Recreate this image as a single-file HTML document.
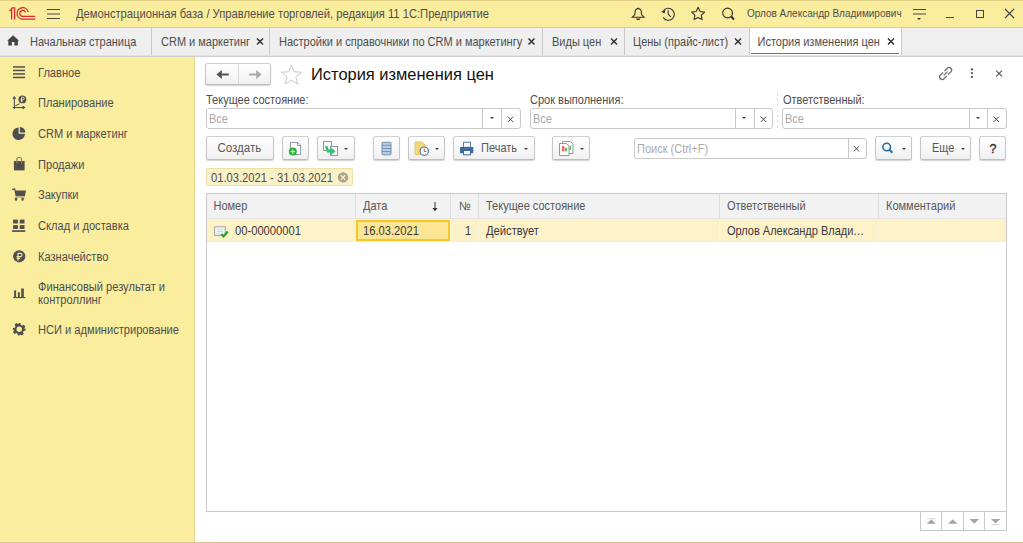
<!DOCTYPE html>
<html><head><meta charset="utf-8">
<style>
*{box-sizing:border-box;margin:0;padding:0}
html,body{width:1023px;height:543px;overflow:hidden;background:#fff;font-family:"Liberation Sans",sans-serif;color:#4d4d4d}
.a{position:absolute}
.t{position:absolute;white-space:nowrap;font-size:11px;line-height:11px;transform:scaleY(1.1);transform-origin:0 9px}
svg{position:absolute;overflow:visible}
#hdr{left:0;top:0;width:1023px;height:28px;background:#fbed9e;border-top:1px solid #e0cf85;border-bottom:1px solid #d9c98a}
#tabs{left:0;top:28px;width:1023px;height:29px;background:#efefef;border-bottom:1px solid #cfcfcf}
.sep{position:absolute;top:28px;width:1px;height:27px;background:#c8c8c8}
#side{left:0;top:57px;width:195px;height:486px;background:#fbed9e;border-right:1px solid #e3d38f}
#bot{left:0;top:542px;width:1023px;height:1px;background:#d9c98a}
.btn{position:absolute;height:24px;border:1px solid #c8c8c8;border-color:#d0d0d0 #c6c6c6 #bdbdbd;border-radius:2.5px;background:linear-gradient(#ffffff,#f0f0f0);box-shadow:0 1px 1px rgba(0,0,0,.18)}
.fld{position:absolute;height:21px;border:1px solid #c9c9c9;border-radius:3px;background:#fff}
.dd{position:absolute;top:0;height:19px;border-left:1px solid #c9c9c9}
.arr{position:absolute;width:0;height:0;border-left:2.4px solid transparent;border-right:2.4px solid transparent;border-top:2.6px solid #3a3a3a}
</style></head><body>
<div id="hdr" class="a"></div>
<div id="tabs" class="a"></div>
<div id="side" class="a"></div>
<div class="a" style="left:0;top:55px;width:1023px;height:1px;background:#e2e2e2"></div>

<!-- logo -->
<svg style="left:0;top:0" width="40" height="28" viewBox="0 0 40 28">
 <g fill="none" stroke="#d8282a" stroke-width="1.3">
  <path d="M9.3,10.6 L11.6,9.8 M11.6,8 V19.6 M11.6,7.9 H14.6 V19.6"/>
  <path d="M28.3,12.2 A5.7,5.7 0 1 0 22.6,19.1 H35.2"/>
  <path d="M25.4,12.3 A2.9,2.9 0 1 0 22.6,16.3 H35.2"/>
 </g>
</svg>
<!-- hamburger -->
<div class="a" style="left:47px;top:9px;width:13px;height:1px;background:#4a4a44"></div>
<div class="a" style="left:47px;top:13px;width:13px;height:2px;background:#9f9a78"></div>
<div class="a" style="left:47px;top:18px;width:13px;height:1px;background:#4a4a44"></div>

<div class="t" style="left:76px;top:9px;font-size:11.2px">Демонстрационная база / Управление торговлей, редакция 11 1С:Предприятие</div>

<!-- header icons -->
<svg style="left:628px;top:4px" width="60" height="20" viewBox="0 0 60 20">
 <g fill="none" stroke="#333" stroke-width="1.1">
  <path d="M10.2,4.6 C7.4,4.6 7,7 7,9.5 C7,11.5 5.2,12.2 4.2,13.3 H16.2 C15.2,12.2 13.4,11.5 13.4,9.5 C13.4,7 13,4.6 10.2,4.6 Z"/>
  <path d="M35.6,6.6 A6,6 0 1 1 35.2,13.4"/>
  <path d="M40.2,6.2 V10 L42.8,12.8"/>
 </g>
 <path d="M9,4.9 L10.2,3.3 L11.4,4.9 Z M7.8,14.6 H12.6 L11.4,16.1 H9 Z" fill="#333"/>
 <path d="M33.2,7.8 L37.4,5.6 L36.6,9.6 Z" fill="#333"/>
</svg>
<svg style="left:686px;top:4px" width="54" height="20" viewBox="0 0 54 20">
 <path d="M12.1,3.3 L14.1,7.5 L18.6,8.1 L15.3,11.2 L16.1,15.6 L12.1,13.5 L8.1,15.6 L8.9,11.2 L5.6,8.1 L10.1,7.5 Z" fill="none" stroke="#333" stroke-width="1.1" stroke-linejoin="round"/>
 <circle cx="41.6" cy="9" r="4.9" fill="none" stroke="#333" stroke-width="1.1"/>
 <path d="M45.2,12.6 L48,15.4" stroke="#333" stroke-width="2.1"/>
</svg>

<div class="t" style="left:747px;top:9px;font-size:10px;line-height:10px;transform:none">Орлов Александр Владимирович</div>
<!-- menu icon -->
<div class="a" style="left:913px;top:9px;width:13px;height:1px;background:#4a4a44"></div>
<div class="a" style="left:913px;top:13px;width:13px;height:2px;background:#a09a78"></div>
<div class="arr" style="left:917.2px;top:17.8px;border-left-width:2.6px;border-right-width:2.6px;border-top-width:2.8px;border-top-color:#333"></div>
<!-- window controls -->
<div class="a" style="left:946px;top:17px;width:8px;height:1px;background:#444"></div>
<div class="a" style="left:976px;top:10px;width:8px;height:8px;border:1px solid #444"></div>
<svg style="left:1000px;top:4px" width="20" height="20" viewBox="0 0 20 20">
 <path d="M5,5 L14,14 M14,5 L5,14" stroke="#444" stroke-width="1.1"/>
</svg>

<!-- tabs -->
<div class="sep" style="left:151px"></div>
<div class="sep" style="left:269px"></div>
<div class="sep" style="left:542px"></div>
<div class="sep" style="left:624px"></div>
<div class="sep" style="left:749px"></div>
<div class="sep" style="left:901px"></div>
<div class="a" style="left:750px;top:28px;width:151px;height:27px;background:#ffffff"></div>
<div class="a" style="left:751px;top:52.7px;width:148px;height:1.7px;background:#27a243"></div>
<svg style="left:4px;top:30px" width="20" height="22" viewBox="0 0 20 22">
 <path d="M9.1,5.3 L15,10.7 H13.9 V15.6 H10.4 V12 H7.9 V15.6 H4.3 V10.7 H3.2 Z" fill="#444"/>
</svg>
<div class="t" style="left:30px;top:36.5px">Начальная страница</div>
<div class="t" style="left:161px;top:36.5px">CRM и маркетинг</div>
<div class="t" style="left:279px;top:36.5px">Настройки и справочники по CRM и маркетингу</div>
<div class="t" style="left:552px;top:36.5px">Виды цен</div>
<div class="t" style="left:633px;top:36.5px">Цены (прайс-лист)</div>
<div class="t" style="left:757.5px;top:36.5px">История изменения цен</div>
<svg style="left:0;top:28px" width="1023" height="28" viewBox="0 0 1023 28">
 <g stroke="#333" stroke-width="1.5">
  <path d="M257,10.5 L263,16.5 M263,10.5 L257,16.5"/>
  <path d="M528.5,10.5 L534.5,16.5 M534.5,10.5 L528.5,16.5"/>
  <path d="M611,10.5 L617,16.5 M617,10.5 L611,16.5"/>
  <path d="M735,10.5 L741,16.5 M741,10.5 L735,16.5"/>
  <path d="M888,10.5 L894,16.5 M894,10.5 L888,16.5"/>
 </g>
</svg>

<!-- sidebar -->
<svg style="left:0;top:56px" width="40" height="290" viewBox="0 0 40 290">
 <g fill="#4f4f4f">
  <!-- главное -->
  <rect x="13" y="10.2" width="12" height="1.5"/><rect x="13" y="13.7" width="12" height="1.5"/><rect x="13" y="17.2" width="12" height="1.5"/><rect x="13" y="20.7" width="12" height="1.5"/>
  <!-- планирование -->
  <path d="M14.3,39.8 L16.3,42.8 H12.3 Z M25.6,51.5 L22.6,49.5 V53.5 Z"/>
  <rect x="13.8" y="42" width="1.1" height="11"/><rect x="12.8" y="51" width="10.5" height="1.1"/>
  <path d="M15.2,49.8 L19.6,47.8" stroke="#4f4f4f" stroke-width="1" fill="none"/>
  <circle cx="22.4" cy="43.4" r="3.9"/>
  <!-- crm pie -->
  <path d="M18.6,71.4 V77.8 H25 A6.3,6.3 0 1 1 18.6,71.4 Z"/>
  <path d="M19.9,71 A5.4,5.4 0 0 1 25.3,76.4 H19.9 Z"/>
  <!-- bag -->
  <rect x="13.9" y="105" width="10.7" height="9.4"/>
  <path d="M16.7,107.5 V104 A2.5,2.5 0 0 1 21.7,104 V107.5" fill="none" stroke="#8c8560" stroke-width="1.2"/>
  <!-- cart -->
  <rect x="12.2" y="132.6" width="2.8" height="1.5"/>
  <path d="M14.2,132.6 L15.2,132.6 L15.6,134.6 H26 L24.8,140.2 H15.6 Z"/>
  <rect x="15.2" y="140.8" width="9.6" height="0.9" fill="#a49c70"/>
  <rect x="14.9" y="141.8" width="2.3" height="2.9" rx="0.9"/><rect x="21.4" y="141.8" width="2.3" height="2.9" rx="0.9"/>
  <!-- склад -->
  <rect x="13.1" y="163.6" width="4.8" height="3.9"/><rect x="19.7" y="163.6" width="4.8" height="3.9"/>
  <rect x="13.1" y="169.1" width="4.8" height="3.9"/><rect x="19.7" y="169.1" width="4.8" height="3.9"/>
  <rect x="12" y="174.2" width="13.3" height="1.7"/>
  <!-- ruble -->
  <circle cx="19.2" cy="200.3" r="6.1"/>
  <!-- chart -->
  <rect x="14.1" y="234.4" width="2" height="7"/><rect x="17.9" y="236.2" width="1.9" height="5.2"/><rect x="21.2" y="232.5" width="2.6" height="9"/>
  <rect x="13.2" y="241" width="12.3" height="1.1"/>
 </g>
 <!-- ruble symbol on circles -->
 <g fill="none" stroke="#f8e9a0" stroke-width="1.1">
  <path d="M18,204.8 V197.4 H20.5 A1.6,1.6 0 0 1 20.5,200.6 H16.6 M16.6,202.4 H20"/>
  <path d="M21.6,46.2 V41.2 H23 A1.2,1.2 0 0 1 23,43.6 H20.6 M20.6,44.9 H23" stroke-width="0.85"/>
 </g>
 <!-- gear -->
 <g transform="translate(19.2,273.3)" fill="#4f4f4f">
  <path d="M-1.2,-6.3 H1.2 L1.6,-4.4 A4.6,4.6 0 0 1 2.9,-3.6 L4.5,-4.6 L6.2,-2.9 L5.2,-1.3 A4.6,4.6 0 0 1 5.6,0 L6.3,-1.2 V1.2 L4.4,1.6 A4.6,4.6 0 0 1 3.6,2.9 L4.6,4.5 L2.9,6.2 L1.3,5.2 A4.6,4.6 0 0 1 0,5.6 L1.2,6.3 H-1.2 L-1.6,4.4 A4.6,4.6 0 0 1 -2.9,3.6 L-4.5,4.6 L-6.2,2.9 L-5.2,1.3 A4.6,4.6 0 0 1 -5.6,0 L-6.3,1.2 V-1.2 L-4.4,-1.6 A4.6,4.6 0 0 1 -3.6,-2.9 L-4.6,-4.5 L-2.9,-6.2 L-1.3,-5.2 A4.6,4.6 0 0 1 0,-5.6 Z"/>
  <circle r="2.7" fill="#fbed9e"/>
 </g>
</svg>
<div class="t" style="font-size:11.1px;left:38px;top:67.8px">Главное</div>
<div class="t" style="font-size:11.1px;left:38px;top:98.3px">Планирование</div>
<div class="t" style="font-size:11.1px;left:38px;top:128.8px">CRM и маркетинг</div>
<div class="t" style="font-size:11.1px;left:38px;top:159.8px">Продажи</div>
<div class="t" style="font-size:11.1px;left:38px;top:190.3px">Закупки</div>
<div class="t" style="font-size:11.1px;left:38px;top:220.8px">Склад и доставка</div>
<div class="t" style="font-size:11.1px;left:38px;top:251.8px">Казначейство</div>
<div class="t" style="font-size:11.1px;left:38px;top:282.3px">Финансовый результат и</div>
<div class="t" style="font-size:11.1px;left:38px;top:294.8px">контроллинг</div>
<div class="t" style="font-size:11.1px;left:38px;top:325.3px">НСИ и администрирование</div>

<!-- content: nav buttons -->
<div class="btn" style="left:205px;top:63px;width:66px;height:22px"></div>
<div class="a" style="left:238px;top:64px;width:1px;height:20px;background:#d8d8d8"></div>
<svg style="left:206px;top:63px" width="66" height="22" viewBox="0 0 66 22">
 <path d="M10.4,11.5 L15.8,6.9 V10.5 H22.8 V12.5 H15.8 V16.1 Z" fill="#555"/>
 <path d="M55.6,11.5 L50.2,6.9 V10.5 H43.2 V12.5 H50.2 V16.1 Z" fill="#aaa"/>
 <path d="M85.40,1.90 L88.10,8.78 L95.48,9.22 L89.77,13.92 L91.63,21.08 L85.40,17.10 L79.17,21.08 L81.03,13.92 L75.32,9.22 L82.70,8.78 Z" fill="none" stroke="#c5c8cc" stroke-width="1"/>
</svg>
<div class="t" style="left:311px;top:65px;font-size:16.45px;line-height:18px;color:#111;transform:none">История изменения цен</div>
<!-- form header icons -->
<svg style="left:930px;top:60px" width="90" height="28" viewBox="0 0 90 28">
 <g transform="translate(15.6,13.5) rotate(-45) scale(0.84)" fill="none" stroke="#6a6a6a" stroke-width="1.5">
  <path d="M-1.2,-3 H-5.8 A3,3 0 0 0 -5.8,3 H-1.2 M1.2,-3 H5.8 A3,3 0 0 1 5.8,3 H1.2 M-3.2,0 H3.2"/>
 </g>
 <path d="M66.2,10.6 L72,16.4 M72,10.6 L66.2,16.4" fill="none" stroke="#555" stroke-width="1.15"/>
 <g fill="#555"><circle cx="41.9" cy="9.4" r="1.15"/><circle cx="41.9" cy="13.1" r="1.15"/><circle cx="41.9" cy="16.9" r="1.15"/></g>
</svg>

<div class="t" style="left:206px;top:94.5px">Текущее состояние:</div>
<div class="t" style="left:530px;top:94.5px">Срок выполнения:</div>
<div class="t" style="left:783px;top:94.5px">Ответственный:</div>
<div class="a" style="left:777px;top:93px;width:0;height:35px;border-left:1px dashed #dedede"></div>

<div class="fld" style="left:206px;top:108px;width:315px"><div class="dd" style="left:275px;width:19px"></div><div class="dd" style="left:294px;width:20px"></div></div>
<div class="fld" style="left:530px;top:108px;width:243px"><div class="dd" style="left:204px;width:19px"></div><div class="dd" style="left:223px;width:19px"></div></div>
<div class="fld" style="left:782px;top:108px;width:225px"><div class="dd" style="left:186px;width:18px"></div><div class="dd" style="left:204px;width:20px"></div></div>
<div class="t" style="left:209px;top:113.5px;color:#aaa">Все</div>
<div class="t" style="left:533px;top:113.5px;color:#aaa">Все</div>
<div class="t" style="left:785px;top:113.5px;color:#aaa">Все</div>
<div class="arr" style="left:489.5px;top:117.4px"></div>
<div class="arr" style="left:742.2px;top:117.4px"></div>
<div class="arr" style="left:975.7px;top:117.4px"></div>
<svg style="left:0;top:108px" width="1023" height="20" viewBox="0 0 1023 20">
 <g stroke="#444" stroke-width="1">
  <path d="M507.8,8.6 L513.2,14 M513.2,8.6 L507.8,14"/>
  <path d="M760.8,8.6 L766.2,14 M766.2,8.6 L760.8,14"/>
  <path d="M993.6,8.6 L999,14 M999,8.6 L993.6,14"/>
 </g>
</svg>

<!-- toolbar -->
<div class="btn" style="left:206px;top:136px;width:68px"></div>
<div class="t" style="left:217.5px;top:143px;font-size:11.5px;color:#585858">Создать</div>
<div class="btn" style="left:282px;top:136px;width:27px"></div>
<div class="btn" style="left:317px;top:136px;width:38px"></div>
<div class="btn" style="left:373px;top:136px;width:27px"></div>
<div class="btn" style="left:408px;top:136px;width:37px"></div>
<div class="btn" style="left:453px;top:136px;width:82px"></div>
<div class="t" style="left:481px;top:143px;color:#585858">Печать</div>
<div class="btn" style="left:552px;top:136px;width:38px"></div>
<div class="arr" style="left:344px;top:147.6px"></div>
<div class="arr" style="left:434.8px;top:147.6px"></div>
<div class="arr" style="left:523.8px;top:147.6px"></div>
<div class="arr" style="left:579.8px;top:147.6px"></div>
<svg style="left:0;top:136px" width="600" height="26" viewBox="0 0 600 26">
 <!-- add doc -->
 <path d="M290.5,6.5 H298 L300.6,9.2 V18.5 H290.5 Z" fill="#fff" stroke="#8e9aab" stroke-width="1"/>
 <path d="M297.5,6.5 V9.5 H300.6" fill="none" stroke="#8e9aab" stroke-width="1"/>
 <circle cx="292.8" cy="15.6" r="4" fill="#2fae3a"/>
 <path d="M290.5,15.6 H295.1 M292.8,13.3 V17.9" stroke="#bfeec2" stroke-width="1.1"/>
 <!-- copy -->
 <rect x="323.5" y="5.5" width="8" height="9" fill="#f4f6f8" stroke="#8e9aab" stroke-width="1"/>
 <rect x="330.5" y="10.5" width="7" height="9" fill="#f4f6f8" stroke="#8e9aab" stroke-width="1"/>
 <path d="M325,10.5 L327.5,10 L328.5,13.5 L331,13.5 L331,11.5 L335.5,15.2 L331,19 L331,16.5 L327,16.5 Z" fill="#27c96a"/>
 <!-- list -->
 <rect x="382" y="6.3" width="9" height="12.5" rx="1" fill="#b8cfe2" stroke="#6c8db0" stroke-width="1"/>
 <path d="M382,9.4 H391 M382,12.5 H391 M382,15.6 H391" stroke="#6c8db0" stroke-width="0.9"/>
 <!-- doc clock -->
 <path d="M415,6 H422 L425.5,9.5 V18.5 H415 Z" fill="#f3d77a" stroke="#e0c060" stroke-width="0.8"/>
 <circle cx="424.2" cy="15.2" r="4.2" fill="#fff" stroke="#4a78b0" stroke-width="1.2"/>
 <path d="M424.2,12.6 V15.4 H426.4" stroke="#d03030" stroke-width="0.9" fill="none"/>
 <!-- printer -->
 <rect x="463.5" y="6.3" width="7" height="5" fill="#fff" stroke="#5a7fa8" stroke-width="1"/>
 <path d="M460,11 H473.3 V17.2 H460 Z" fill="#3d6a9e"/>
 <rect x="463.5" y="14.5" width="7" height="4.3" fill="#fff" stroke="#3d6a9e" stroke-width="1"/>
 <!-- report -->
 <path d="M562.5,5.5 H570.5 L573,8 V17.5 H562.5 Z" fill="#fff" stroke="#8e9aab" stroke-width="1"/>
 <path d="M559.5,7.5 H566.5 L569,10 V19.5 H559.5 Z" fill="#fff" stroke="#8e9aab" stroke-width="1"/>
 <rect x="562" y="10" width="2.5" height="5.3" fill="#ef6b63"/>
 <rect x="565" y="12" width="2" height="3.3" fill="#5bbf4f"/>
 <rect x="569.5" y="10" width="1.6" height="4" fill="#5bbf4f"/>
</svg>

<div class="fld" style="left:634px;top:138px;width:233px"><div class="dd" style="left:213px;width:19px"></div></div>
<div class="t" style="left:637px;top:144px;color:#aaa">Поиск (Ctrl+F)</div>
<svg style="left:840px;top:138px" width="20" height="20" viewBox="0 0 20 20">
 <path d="M13.8,8.1 L19.2,13.5 M19.2,8.1 L13.8,13.5" stroke="#444" stroke-width="1"/>
</svg>
<div class="btn" style="left:875px;top:136px;width:37px"></div>
<svg style="left:874px;top:136px" width="40" height="26" viewBox="0 0 40 26">
 <circle cx="12.7" cy="11" r="3.8" fill="none" stroke="#2a6fa8" stroke-width="1.6"/>
 <path d="M15.5,13.8 L18.4,16.8" stroke="#2a6fa8" stroke-width="2"/>
</svg>
<div class="arr" style="left:901.5px;top:147.6px"></div>
<div class="btn" style="left:920px;top:136px;width:51px"></div>
<div class="t" style="left:932px;top:143px;color:#585858">Еще</div>
<div class="arr" style="left:960.8px;top:147.6px"></div>
<div class="btn" style="left:979px;top:136px;width:27px"></div>
<div class="t" style="left:989.6px;top:143px;font-size:12.6px;line-height:12px;color:#2e2e2e;transform:none;-webkit-text-stroke:0.3px #2e2e2e">?</div>

<div class="a" style="left:206px;top:168px;width:147px;height:18px;background:#fbf1c9;border:1px solid #eedfa6;border-radius:2px"></div>
<div class="t" style="left:211px;top:173px;font-size:11.2px">01.03.2021 - 31.03.2021</div>
<svg style="left:330px;top:165px" width="26" height="26" viewBox="0 0 26 26">
 <circle cx="13" cy="12.4" r="5.2" fill="#a9a58d"/>
 <path d="M10.8,10.2 L15.2,14.6 M15.2,10.2 L10.8,14.6" stroke="#fbf1c9" stroke-width="1.3"/>
</svg>

<!-- table -->
<div class="a" style="left:206px;top:193px;width:801px;height:319px;border:1px solid #c9c9c9"></div>
<div class="a" style="left:207px;top:194px;width:799px;height:25px;background:#f2f2f2;border-bottom:1px solid #e4e4e4"></div>
<div class="a" style="left:207px;top:219px;width:799px;height:23px;background:#fdf1c8;border-bottom:1px solid #eeeeee"></div>
<div class="a" style="left:355px;top:194px;width:1px;height:25px;background:#dedede"></div><div class="a" style="left:355px;top:219px;width:1px;height:23px;background:#fbf5dc"></div>
<div class="a" style="left:450px;top:194px;width:1px;height:25px;background:#dedede"></div><div class="a" style="left:450px;top:219px;width:1px;height:23px;background:#fbf5dc"></div>
<div class="a" style="left:478px;top:194px;width:1px;height:25px;background:#dedede"></div><div class="a" style="left:478px;top:219px;width:1px;height:23px;background:#fbf5dc"></div>
<div class="a" style="left:719px;top:194px;width:1px;height:25px;background:#dedede"></div><div class="a" style="left:719px;top:219px;width:1px;height:23px;background:#fbf5dc"></div>
<div class="a" style="left:878px;top:194px;width:1px;height:25px;background:#dedede"></div><div class="a" style="left:878px;top:219px;width:1px;height:23px;background:#fbf5dc"></div>
<div class="t" style="left:213.5px;top:201px;color:#575757">Номер</div>
<div class="t" style="left:363px;top:201px;color:#575757">Дата</div>
<svg style="left:425px;top:195px" width="20" height="20" viewBox="0 0 20 20">
 <path d="M10,7 V15" stroke="#333" stroke-width="1"/>
 <path d="M7.5,13 H12.5 L10,16.2 Z" fill="#333"/>
</svg>
<div class="t" style="left:459px;top:201px;color:#575757">№</div>
<div class="t" style="left:486px;top:201px;color:#575757">Текущее состояние</div>
<div class="t" style="left:727px;top:201px;color:#575757">Ответственный</div>
<div class="t" style="left:886px;top:201px;color:#575757">Комментарий</div>
<div class="a" style="left:356px;top:220px;width:94px;height:21px;background:#fce593;border:2px solid #f6c626"></div>
<svg style="left:210px;top:220px" width="24" height="20" viewBox="0 0 24 20">
 <rect x="4.6" y="6.8" width="10.6" height="8.6" fill="#fafafa" stroke="#a0a0a0" stroke-width="1"/>
 <path d="M6.5,9.3 H13 M6.5,11.6 H13 M6.5,13.7 H10" stroke="#c5cdd8" stroke-width="0.9"/>
 <path d="M11.2,14 L13.6,16.4 L17.8,11.6" fill="none" stroke="#25a534" stroke-width="2.3"/>
</svg>
<div class="t" style="left:235px;top:226px;color:#3a3a3a;font-size:11.2px">00-00000001</div>
<div class="t" style="left:363px;top:226px;color:#3a3a3a;font-size:11.2px">16.03.2021</div>
<div class="t" style="left:465px;top:226px;color:#3a3a3a">1</div>
<div class="t" style="left:486px;top:226px;color:#3a3a3a;font-size:11.2px">Действует</div>
<div class="t" style="left:727px;top:226px;color:#3a3a3a">Орлов Александр Влади<span style="letter-spacing:0.55px">...</span></div>

<div class="a" style="left:920px;top:511px;width:87px;height:20px;border:1px solid #c9c9c9;border-top:none"></div>
<div class="a" style="left:941px;top:511px;width:1px;height:19px;background:#c9c9c9"></div>
<div class="a" style="left:963px;top:511px;width:1px;height:19px;background:#c9c9c9"></div>
<div class="a" style="left:984px;top:511px;width:1px;height:19px;background:#c9c9c9"></div>
<svg style="left:916px;top:508px" width="94" height="26" viewBox="0 0 94 26">
 <g fill="#a3a3a3">
  <path d="M10.6,15.8 L15.3,11.5 L20,15.8 Z"/><rect x="11" y="10.3" width="8.6" height="0.9" fill="#cfcfcf"/>
  <path d="M32,15.8 L36.7,11.2 L41.4,15.8 Z"/>
  <path d="M53.6,11 L63,11 L58.3,15.8 Z"/>
  <path d="M75,11 L84.2,11 L79.6,15.4 Z"/><rect x="75.4" y="16.2" width="8.4" height="0.9" fill="#cfcfcf"/>
 </g>
</svg>

<div id="bot" class="a"></div>
</body></html>
